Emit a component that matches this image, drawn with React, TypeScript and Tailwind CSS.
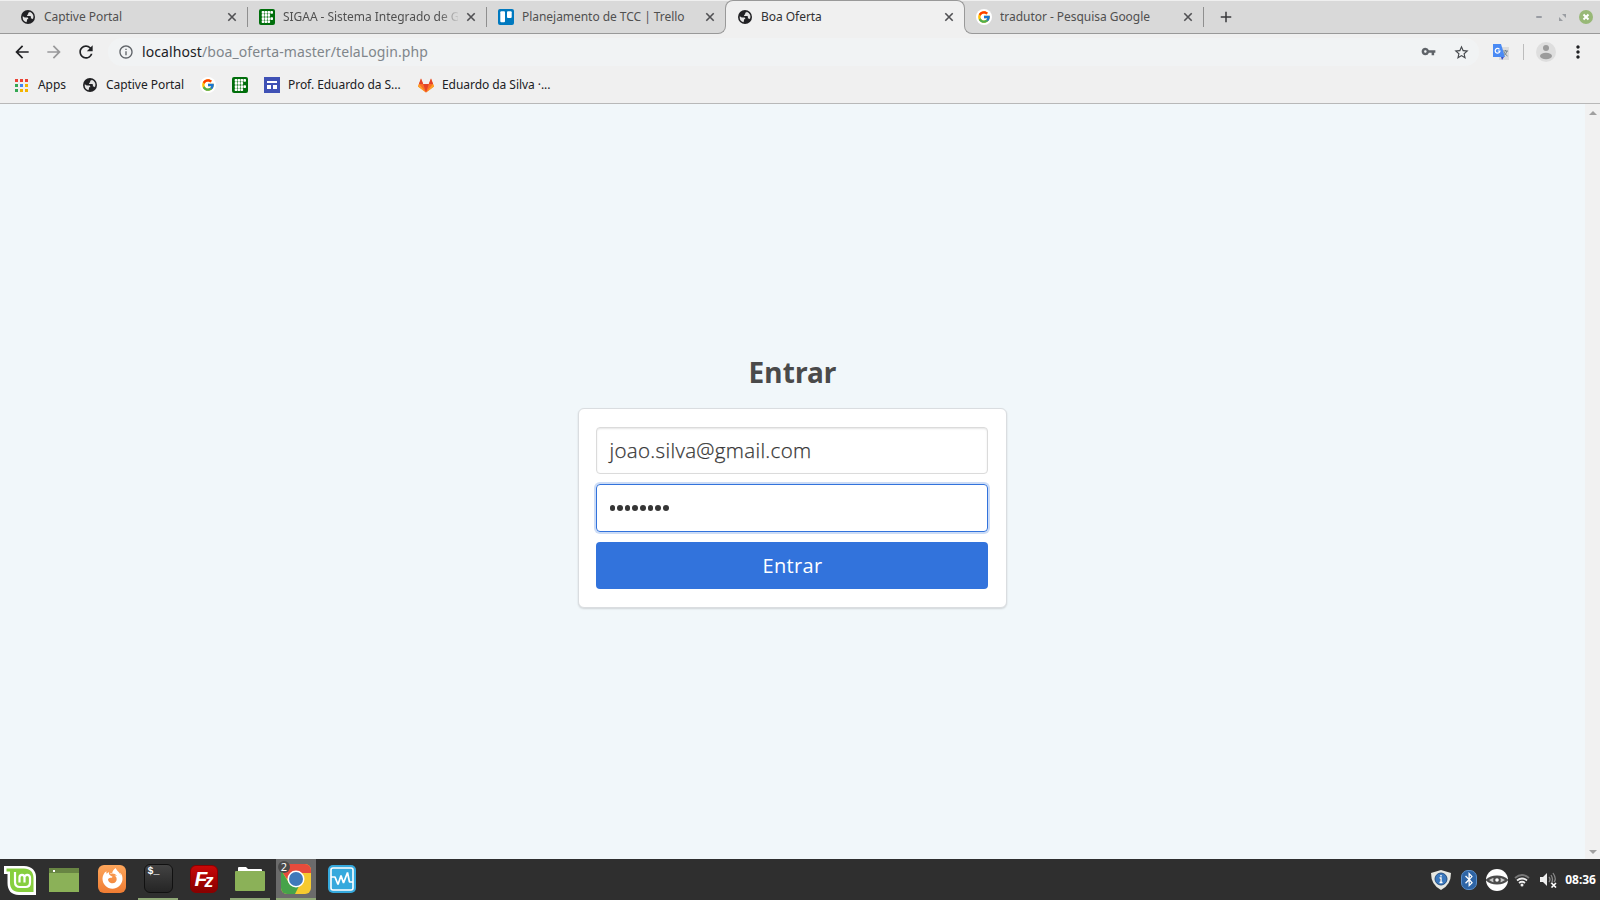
import type { ReactNode } from "react";
import { MdVpnKey, MdStarBorder, MdArrowBack, MdArrowForward, MdRefresh, MdInfoOutline, MdMoreVert, MdAdd } from "react-icons/md";
import { FcGoogle } from "react-icons/fc";
import { FaFirefoxBrowser, FaBluetoothB } from "react-icons/fa";

function Globe({ className = "" }: { className?: string }) {
  return (
    <svg viewBox="0 0 14 14" className={`size-[14px] shrink-0 ${className}`}>
      <circle cx="7" cy="7" r="7" fill="#212124" />
      <path d="M8.8 1.7 C8.5 2.4 7.9 2.7 7.2 2.8 V4 C7.2 4.5 6.8 4.8 6.1 4.9 V6 H9 C9.6 6 9.9 6.5 9.9 7.1 V8.5 H10.7 C11.2 8.5 11.6 8.8 11.8 9.3 A5.4 5.4 0 0 0 8.8 1.7Z M1.8 6.2 C3 7.1 3.6 7.4 4.5 7.4 H6.1 C6.8 7.4 7.2 7.8 7.2 8.4 V9.3 H6 V10.3 C6 11 5.6 11.5 5.5 12.2 A5.4 5.4 0 0 1 1.8 6.2Z" fill="#e4e4e4" />
    </svg>
  );
}

function IfIcon() {
  const rows = [4, 3, 4, 3];
  return (
    <svg viewBox="0 0 16 16" className="size-4 shrink-0">
      <rect width="16" height="16" rx="2" fill="#006e0b" />
      {rows.flatMap((n, r) =>
        Array.from({ length: n }, (_, c) => (
          <rect key={`${r}-${c}`} x={2.7 + c * 2.9} y={2 + r * 3.1} width="2.6" height="2.7" rx=".7" fill="#fff" />
        )),
      )}
    </svg>
  );
}

function Trello() {
  return (
    <svg viewBox="0 0 16 16" className="size-4 shrink-0">
      <rect width="16" height="16" rx="2" fill="#0079bf" />
      <rect x="2.3" y="2.3" width="4.7" height="11" rx="1" fill="#fff" />
      <rect x="9" y="2.3" width="4.7" height="6.7" rx="1" fill="#fff" />
    </svg>
  );
}

function Google() {
  return <span className="flex size-4 shrink-0 items-center justify-center rounded-full bg-white"><FcGoogle size={14} /></span>;
}

function Tab({ icon, title, sep, active, fade }: { icon: ReactNode; title: string; sep?: boolean; active?: boolean; fade?: boolean }) {
  return (
    <div className={`flex h-full w-[239px] shrink-0 items-center ${active ? "rounded-t-lg border border-b-0 border-[#999] bg-[#f0f0f0] pb-px pl-[11px] text-[#303033]" : "pl-[11px] text-[#505050]"}`}>
      <span className="flex w-4 justify-center">{icon}</span>
      <span className={`ml-2 w-[176px] overflow-hidden text-[12px] leading-4 tracking-[-0.04px] whitespace-nowrap ${fade ? "[mask-image:linear-gradient(to_right,black_156px,transparent_177px)]" : ""}`}>{title}</span>
      <svg viewBox="0 0 14 14" className={`size-[14px] shrink-0 ${sep ? "ml-[6px]" : "ml-[5px]"}`}>
        <path d="M3.3 3.3L10.7 10.7M10.7 3.3L3.3 10.7" stroke="#505053" strokeWidth="1.600" />
      </svg>
      {sep && <span className="ml-[8px] h-5 w-px bg-[#8f8f8f]" />}
    </div>
  );
}

function TabStrip() {
  return (
    <div className="flex h-[34px] shrink-0 border-t border-[#efefef] bg-[#d9d9d9]">
      <div className="flex w-[718px] shrink-0 border-b border-[#999] pl-[9px]">
        <Tab icon={<Globe />} title="Captive Portal" sep />
        <Tab icon={<IfIcon />} title="SIGAA - Sistema Integrado de G" sep fade />
        <div className="w-[231px]"><Tab icon={<Trello />} title="Planejamento de TCC | Trello" /></div>
      </div>
      <div className="z-10 -mr-px h-2 w-2 shrink-0 self-end bg-[#f0f0f0]">
        <div className="size-full rounded-br-lg border-r border-b border-[#999] bg-[#d9d9d9]" />
      </div>
      <div className="-mt-px h-[34px] w-[240px] shrink-0 [&>div]:w-[240px]"><Tab icon={<Globe />} title="Boa Oferta" active /></div>
      <div className="z-10 -ml-px h-2 w-2 shrink-0 self-end bg-[#f0f0f0]">
        <div className="size-full rounded-bl-lg border-b border-l border-[#999] bg-[#d9d9d9]" />
      </div>
      <div className="flex grow items-center border-b border-[#999]">
        <div className="-ml-[7px] h-full"><Tab icon={<Google />} title="tradutor - Pesquisa Google" sep /></div>
        <MdAdd size={18} className="ml-[13px] text-[#38383b]" />
        <div className="mr-[7px] ml-auto flex items-center">
          <span className="h-[2px] w-[6px] rounded-full bg-[#999ca3]" />
          <svg viewBox="0 0 7 7" className="ml-[17px] size-[7px]"><path d="M3 0H7V4Z M0 3V7H4Z" fill="#9a9da2" /></svg>
          <svg viewBox="0 0 14 14" className="ml-[13px] size-[14px]">
            <circle cx="7" cy="7" r="7" fill="#98b877" />
            <path d="M4.500 4.500L9.500 9.500M9.500 4.500L4.500 9.500" stroke="#fff" strokeWidth="2" />
          </svg>
        </div>
      </div>
    </div>
  );
}

function AddressBar() {
  return (
    <div className="flex h-[36px] shrink-0 items-center bg-[#f0f0f0] pl-3">
      <MdArrowBack size={20} className="text-[#202124]" />
      <MdArrowForward size={20} className="ml-[12px] text-[#98989a]" />
      <MdRefresh size={20} className="ml-[12px] text-[#202124]" />
      <div className="ml-3 flex h-7 w-[1371px] items-center rounded-full bg-[#f1f3f4] pr-[9px] pl-[10px]">
        <MdInfoOutline size={16} className="text-[#5f6368]" />
        <span className="ml-2 text-[14px] leading-5 tracking-[0.09px] text-[#80868b]"><span className="text-[#202124]">localhost</span>/boa_oferta-master/telaLogin.php</span>
        <MdVpnKey size={15} className="mb-px ml-auto text-[#5f6368]" />
        <MdStarBorder size={17} className="ml-[17px] text-[#46494d]" />
      </div>
      <svg viewBox="0 0 16 16" className="ml-[14px] size-4">
        <rect x="6" y="3" width="10" height="13" fill="#dcdcdc" />
        <path d="M8 13H11L9 16Z" fill="#3b4fc4" />
        <path d="M0 0H8L12 13H0Z" fill="#4a8af4" />
        <path d="M6.5 5.3A2.4 2.4 0 1 0 7 7H4.8" stroke="#fff" strokeWidth="1.200" fill="none" />
        <path d="M10 7H15M12.5 6V7M14 7Q13 10 11 11.5M11 8Q12 10.5 14.5 12" stroke="#72828c" fill="none" />
      </svg>
      <span className="ml-[14px] h-4 w-px bg-[#bcbcbc]" />
      <svg viewBox="0 0 20 20" className="ml-3 size-5">
        <circle cx="10" cy="10" r="10" fill="#dedede" />
        <circle cx="10" cy="6" r="3" fill="#9b9b9b" />
        <ellipse cx="10" cy="14" rx="6" ry="3.2" fill="#9b9b9b" />
      </svg>
      <MdMoreVert size={20} className="ml-[12px] text-[#202124]" />
    </div>
  );
}

function Bookmarks() {
  const colors = ["#ea4335", "#ea4335", "#ea4335", "#34a853", "#4285f4", "#f4b400", "#34a853", "#f4b400", "#f4b400"];
  return (
    <div className="flex h-[34px] shrink-0 items-center border-b border-[#b8b8b8] bg-[#f0f0f0] pb-[3px] pl-[15px] text-[12px] tracking-[-0.05px] whitespace-nowrap text-[#202124]">
      <svg viewBox="0 0 13 13" className="size-[13px]">
        {colors.map((c, i) => <rect key={i} x={(i % 3) * 5} y={Math.floor(i / 3) * 5} width="3" height="3" fill={c} />)}
      </svg>
      <span className="ml-[10px] w-[28px]">Apps</span>
      <Globe className="ml-[17px]" />
      <span className="ml-[9px] w-[78px]">Captive Portal</span>
      <span className="ml-[16px]"><Google /></span>
      <span className="ml-[16px]"><IfIcon /></span>
      <svg viewBox="0 0 16 16" className="ml-[16px] size-4"><rect width="16" height="16" fill="#3f51b5" /><path d="M3 4H13V6H3Z M3 8H7V12H3Z M9 8H13V12H9Z" fill="#fff" /></svg>
      <span className="ml-2 w-[113px]">Prof. Eduardo da S...</span>
      <svg viewBox="0 0 16 15" className="ml-[17px] h-[15px] w-4">
        <path d="M8 14.5L0 8.6L3 .5L5.2 6H10.8L13 .5L16 8.6Z" fill="#fc6d26" />
        <path d="M8 14.5L5.2 6H10.8Z M0 8.6L3 .5L5.2 6H1Z M16 8.6L13 .5L10.8 6H15Z" fill="#e24329" />
        <path d="M8 14.5L0 8.6L1 6Z M8 14.5L16 8.6L15 6Z" fill="#fca326" />
      </svg>
      <span className="ml-2">Eduardo da Silva ·...</span>
    </div>
  );
}

function Login() {
  return (
    <main className="flex grow justify-center bg-[#f1f7fa] pt-[247px] pr-px">
      <div className="flex w-[428px] flex-col items-center">
        <h1 className="pl-px text-[28px] leading-[42px] font-bold tracking-[0.1px] text-[#4a4a4a]">Entrar</h1>
        <form className="mt-[15px] flex h-[200px] w-[429px] shrink-0 flex-col rounded-[6px] border border-[#dadde0] bg-white pt-[18px] pl-[17px] shadow-[0_1px_2px_rgba(10,10,10,0.14)]">
          <div className="flex h-[47px] w-[392px] items-center rounded border border-[#dbdbdb] px-[13px] font-['Open_Sans','Noto_Sans',sans-serif] text-[20.5px] font-light tracking-[0.33px] text-[#363636] shadow-[inset_0_1px_2px_rgba(10,10,10,0.1)] [-webkit-text-stroke:0.25px_#363636]"><span className="whitespace-nowrap">joao.silva@gmail.com</span></div>
          <div className="mt-[10px] flex h-[48px] w-[392px] items-center gap-[2px] rounded border border-[#3273dc] px-[13px] shadow-[0_0_0_2px_rgba(50,115,220,0.25)]">
            {Array.from({ length: 8 }, (_, i) => <span key={i} className="mr-[0.1px] ml-[0.05px] size-[5.5px] rounded-full bg-[#363636]" />)}
          </div>
          <button type="button" className="mt-[10px] h-[47px] w-[392px] rounded bg-[#3273dc] pl-[2px] font-['Open_Sans','Noto_Sans',sans-serif] text-[20px] tracking-[0.35px] text-white">Entrar</button>
        </form>
      </div>
    </main>
  );
}

function Task({ children, open, active, className = "" }: { children: ReactNode; open?: boolean; active?: boolean; className?: string }) {
  return (
    <div className={`flex h-[41px] w-10 shrink-0 items-center justify-center border-b-2 ${open ? "border-[#8fa876]" : "border-transparent"} ${active ? "bg-[#6b6b6b]" : ""} ${className}`}>{children}</div>
  );
}

function Taskbar() {
  return (
    <footer className="flex h-[41px] shrink-0 items-center bg-[#2f2f2f]">
      <svg viewBox="0 0 32 30" className="ml-1 h-[30px] w-8 shrink-0">
        <path d="M0 1H20C28 1 32 6 32 12V30H15C7 30 3.500 25 3.500 18V9H0Z" fill="#fff" />
        <path d="M2.500 3.500H20C26 3.500 29.500 7 29.500 13V27H15C9 27 6 23 6 18V6.500H2.500Z" fill="#87cf3e" />
        <path d="M11 7V17C11 20.500 13 22 16 22H21.500C24.500 22 26 20 26 17.500V13C26 9 20.500 9 20.500 12.500V17.500M20.500 12.500C20.500 9 15.500 9 15.500 12.500V17.500" fill="none" stroke="#fff" strokeWidth="2.200" />
      </svg>
      <svg viewBox="0 0 30 24" className="ml-[13px] h-6 w-[30px] shrink-0"><rect width="30" height="24" fill="#8bb158" /><rect width="30" height="5" fill="#688543" /><rect x="4" y="2" width="2" height="2" fill="#fff" /></svg>
      <Task className="ml-[13px]"><span className="flex size-7 items-center justify-center rounded-md bg-gradient-to-b from-[#fda65b] to-[#ef7c32]"><FaFirefoxBrowser size={21} className="text-white" /></span></Task>
      <Task open className="ml-[6px]"><span className="h-[29px] w-[29px] rounded-md border border-[#111] bg-gradient-to-b from-[#434343] to-[#252525] pl-[3px] font-['Liberation_Mono',monospace] text-[10px] leading-[14px] font-bold text-white">$_</span></Task>
      <Task className="ml-[6px]"><span className="flex size-7 items-center justify-center rounded-md border border-[#8a0000] bg-gradient-to-b from-[#c90808] to-[#880000] font-['Liberation_Sans',sans-serif] font-bold text-white italic"><span className="text-[21px] leading-6">F</span><span className="-ml-[3px] pt-1 text-[18px] leading-6">z</span></span></Task>
      <Task open className="ml-[6px]"><svg viewBox="0 0 30 25" className="h-[25px] w-[30px]"><path d="M3 6V2Q3 1 4 1H11L13 3H26Q27 3 27 4V7Z" fill="#fff" /><rect y="5" width="30" height="20" rx="1" fill="#8bb158" /></svg></Task>
      <Task open active className="relative ml-[6px]">
        <svg viewBox="0 0 30 30" className="size-[30px]">
          <defs><clipPath id="tile"><rect width="30" height="30" rx="6" /></clipPath></defs>
          <g clipPath="url(#tile)"><rect width="30" height="30" fill="#f6ca2f" /><path d="M0 0H30V9H15L6 15L0 6Z" fill="#e74b3c" /><path d="M0 6L8 19L18 22L14 30H0Z" fill="#46a34a" /></g>
          <circle cx="15" cy="15" r="8.5" fill="#fff" /><circle cx="15" cy="15" r="7" fill="#4079ba" />
        </svg>
        <span className="absolute top-[2px] left-[2px] flex size-3 items-center justify-center rounded-full bg-[#4a4a4a] text-[11px] leading-3 text-white">2</span>
      </Task>
      <Task className="ml-[6px]"><svg viewBox="0 0 28 28" className="size-7"><rect width="28" height="28" rx="5" fill="#35a9dd" /><rect x="3" y="3" width="22" height="22" rx="2" fill="none" stroke="#fff" strokeWidth="1.600" /><path d="M3 12H7L10 19.500L13 10.500L15.500 18L19.500 7.500L21.500 17H25" fill="none" stroke="#fff" strokeWidth="1.700" strokeLinejoin="bevel" /></svg></Task>
      <div className="ml-auto flex items-center pr-[4px]">
        <svg viewBox="0 0 20 20" className="size-5"><path d="M10 0L20 3Q20 15 10 20Q0 15 0 3Z" fill="#e7e8e2" /><circle cx="10" cy="9" r="6" fill="#3a78bd" stroke="#254f81" /><path d="M10 5V6.500M8.500 8H10V12.500M8.500 12.500H11.500" stroke="#fff" strokeWidth="1.4" /></svg>
        <span className="ml-[10px] flex h-5 w-4 items-center justify-center rounded-[7px] border border-[#5b8fca] bg-[#2d64a5]"><FaBluetoothB size={15} className="text-white" /></span>
        <svg viewBox="0 0 22 22" className="ml-[9px] size-[22px]"><circle cx="11" cy="11" r="11" fill="#fff" /><path d="M0 10.500Q4 6.500 11 6.500Q18 6.500 22 10.500V11.500Q18 15.500 11 15.500Q4 15.500 0 11.500Z" fill="#4c4c4c" /><path d="M3 11Q6 8.500 11 8.500Q16 8.500 19 11Q16 13.500 11 13.500Q6 13.500 3 11Z" fill="#c9c9c9" /><circle cx="11" cy="11" r="3.800" fill="#4c4c4c" /><circle cx="11" cy="11" r="1.800" fill="#fff" /></svg>
        <svg viewBox="0 0 16 14" className="ml-[6px] h-[14px] w-4" fill="none" strokeWidth="1.800"><path d="M1 5Q8-1 15 5" stroke="#777" /><path d="M3 7.500Q8 3.500 13 7.500M5 10Q8 7.500 11 10" stroke="#eee" /><circle cx="8" cy="12" r="1.500" fill="#eee" /></svg>
        <svg viewBox="0 0 17 16" className="ml-[10px] h-4 w-[17px]" fill="none"><path d="M0 5H3L7 1V14L3 10H0Z" fill="#eee" /><path d="M9 5Q11 7.500 9 10M11 3Q14 7.500 11 12M13 1Q17 7 14 10" stroke="#888" strokeWidth="1.300" /><path d="M11.500 11L16 15.500M16 11L11.500 15.500" stroke="#fff" strokeWidth="1.600" /></svg>
        <span className="ml-[8px] text-[12px] font-bold text-white">08:36</span>
      </div>
    </footer>
  );
}

export default function App() {
  return (
    <div className="flex h-[900px] w-[1600px] flex-col overflow-hidden font-['Noto_Sans',sans-serif]">
      <TabStrip />
      <AddressBar />
      <Bookmarks />
      <div className="flex min-h-0 grow">
        <Login />
        <div className="flex w-[15px] flex-col items-center justify-between bg-[#f1f1f1] pt-[7px] pb-[5px]">
          <svg viewBox="0 0 8 4" className="h-1 w-2"><path d="M0 4L4 0L8 4Z" fill="#a0a0a0" /></svg>
          <svg viewBox="0 0 8 4" className="h-1 w-2"><path d="M0 0L4 4L8 0Z" fill="#a0a0a0" /></svg>
        </div>
      </div>
      <Taskbar />
    </div>
  );
}
